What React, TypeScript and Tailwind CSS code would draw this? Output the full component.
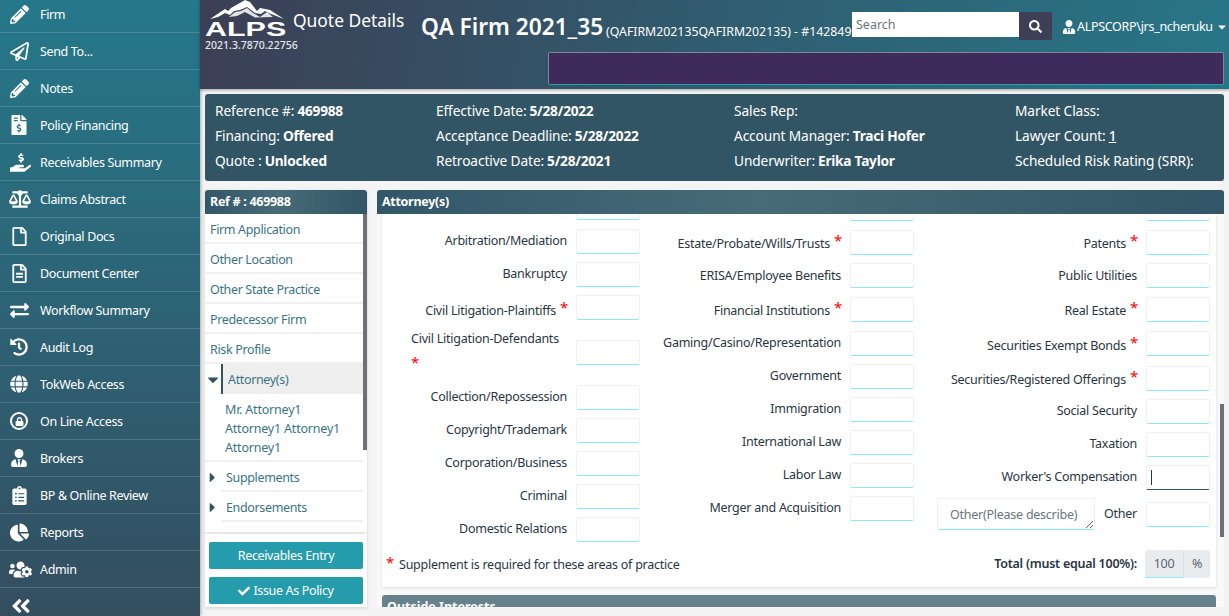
import { FaPencilAlt, FaRegPaperPlane, FaFileInvoiceDollar, FaHandHoldingUsd, FaBalanceScale, FaRegFile, FaRegFileAlt, FaExchangeAlt, FaHistory, FaGlobe, FaLock, FaUserTie, FaClipboardList, FaChartPie, FaUsersCog, FaAngleDoubleLeft, FaSearch, FaCheck, FaCaretDown, FaCaretRight } from 'react-icons/fa';
import type { ReactNode } from 'react';

const font = '[font-family:"Noto_Sans",sans-serif]';

function OnlineIcon() {
  return (
    <span className="relative flex h-[18px] w-[18px] items-center justify-center rounded-full border-2 border-white">
      <FaLock className="text-[9px]" />
    </span>
  );
}

const navItems: { label: string; icon: ReactNode; cls: string }[] = [
  { label: 'Firm', icon: <FaPencilAlt className="text-[19px]" />, cls: 'h-[33px]' },
  { label: 'Send To...', icon: <FaRegPaperPlane className="text-[19px]" />, cls: 'h-[37px]' },
  { label: 'Notes', icon: <FaPencilAlt className="text-[19px]" />, cls: 'h-[37px]' },
  { label: 'Policy Financing', icon: <FaFileInvoiceDollar className="text-[20px] -ml-[1px]" />, cls: 'h-[37px]' },
  { label: 'Receivables Summary', icon: <FaHandHoldingUsd className="text-[21px]" />, cls: 'h-[37px]' },
  { label: 'Claims Abstract', icon: <FaBalanceScale className="text-[22px] -ml-[1px]" />, cls: 'h-[37px]' },
  { label: 'Original Docs', icon: <FaRegFile className="text-[19px]" />, cls: 'h-[37px]' },
  { label: 'Document Center', icon: <FaRegFileAlt className="text-[19px]" />, cls: 'h-[37px]' },
  { label: 'Workflow Summary', icon: <FaExchangeAlt className="text-[19px]" />, cls: 'h-[37px]' },
  { label: 'Audit Log', icon: <FaHistory className="text-[18px]" />, cls: 'h-[37px]' },
  { label: 'TokWeb Access', icon: <FaGlobe className="text-[18px]" />, cls: 'h-[37px]' },
  { label: 'On Line Access', icon: <OnlineIcon />, cls: 'h-[37px]' },
  { label: 'Brokers', icon: <FaUserTie className="text-[18px]" />, cls: 'h-[37px]' },
  { label: 'BP & Online Review', icon: <FaClipboardList className="text-[19px]" />, cls: 'h-[37px]' },
  { label: 'Reports', icon: <FaChartPie className="text-[19px]" />, cls: 'h-[37px]' },
  { label: 'Admin', icon: <FaUsersCog className="text-[23px] -ml-[1px]" />, cls: 'h-[37px]' },
];

function Sidebar() {
  return (
    <aside className="flex w-[200px] shrink-0 flex-col bg-[linear-gradient(180deg,#25788a,#344e60)] text-white shadow-[1px_0_3px_rgba(0,0,0,0.3)]">
      {navItems.map((item) => (
        <div key={item.label} className={`flex items-end border-b border-white/15 pl-[10px] ${item.cls}`}>
          <div className="flex h-[36px] items-center">
            <span className="flex w-[30px] items-center">{item.icon}</span>
            <span className="pt-[2px] text-[12.5px] tracking-[-0.35px]">{item.label}</span>
          </div>
        </div>
      ))}
      <div className="flex flex-1 items-center pt-[7px] pl-[10px]">
        <FaAngleDoubleLeft className="text-[22px]" />
      </div>
    </aside>
  );
}

function Logo() {
  return (
    <div className="w-[93px] shrink-0 pl-[5px] text-white">
      <svg viewBox="0 0 80 20" className="block h-[20px] w-[80px]" fill="currentColor">
        <polygon points="5,19 20,9 23,11 26,8 40,0 45,2 52,11 55,8 65,10 79,19 66,14 60,11 56,14 50,13 42,7 35,10 29,11 25,15 20,13 13,17" />
        <polygon points="24,17 30,12 36,11 42,8 48,13 55,17 62,12 68,17 50,17.5 40,12 32,16" opacity="0.85" />
      </svg>
      <div className="h-[17px] w-fit origin-left [transform:scaleX(1.45)] text-[21px] leading-[17px] font-bold [font-family:'Liberation_Sans',sans-serif]">ALPS</div>
      <div className="mt-[1px] text-[10.5px] leading-[14px] font-medium text-[#e4e8ea]">2021.3.7870.22756</div>
    </div>
  );
}

function Header() {
  return (
    <header className="flex h-[89px] shrink-0 bg-[linear-gradient(100deg,#3c3f55,#2f5f72_55%,#277687)] text-white shadow-[0_1px_3px_rgba(0,0,0,0.35)]">
      <Logo />
      <div className="flex min-w-0 flex-1 flex-col">
        <div className="flex h-[52px] items-start">
          <div className="w-[128px] shrink-0 pt-[6px] text-[17.4px] leading-[28px]">Quote Details</div>
          <div className="w-[185px] shrink-0 pt-[11px] text-[22.7px] leading-[32px] font-semibold whitespace-nowrap">QA Firm 2021_35</div>
          <div className="w-[246px] shrink-0 pt-[23px] text-[12.3px] leading-[18px] whitespace-nowrap">(QAFIRM202135QAFIRM202135) - #142849</div>
          <div className="mt-[12px] flex items-start">
            <div className="h-[25px] w-[167px] bg-white pl-[4px] text-[12.5px] leading-[25px] text-[#6c757d]">Search</div>
            <div className="flex h-[28px] w-[33px] items-center justify-center rounded-r-[2px] bg-[#3c3f55]">
              <FaSearch className="text-[13px]" />
            </div>
          </div>
          <div className="mt-[17px] ml-[10px] flex items-center text-[12.5px] leading-[20px] tracking-[-0.3px] whitespace-nowrap">
            <FaUserTie className="mr-[1px] text-[14px]" />
            <span>ALPSCORP\jrs_ncheruku</span>
            <FaCaretDown className="ml-[3px] text-[12px]" />
          </div>
        </div>
        <div className="mr-[5px] ml-auto h-[33px] w-[676px] rounded-[2px] border border-[#7d8a93] border-b-[#25a0b0] bg-[#3f2a5c]" />
      </div>
    </header>
  );
}

const infoCols: { w: string; rows: [string, string][] }[] = [
  { w: 'w-[221px]', rows: [['Reference #:', '469988'], ['Financing:', 'Offered'], ['Quote :', 'Unlocked']] },
  { w: 'w-[298px]', rows: [['Effective Date:', '5/28/2022'], ['Acceptance Deadline:', '5/28/2022'], ['Retroactive Date:', '5/28/2021']] },
  { w: 'w-[281px]', rows: [['Sales Rep:', ''], ['Account Manager:', 'Traci Hofer'], ['Underwriter:', 'Erika Taylor']] },
  { w: 'w-[209px]', rows: [['Market Class:', ''], ['Lawyer Count:', '1'], ['Scheduled Risk Rating (SRR):', '']] },
];

function InfoPanel() {
  return (
    <section className="mx-[5px] mt-[5px] flex h-[87px] shrink-0 rounded-[3px] bg-[#325566] pt-[4px] pl-[10px] text-[13.7px] leading-[25px] tracking-[-0.1px] text-white">
      {infoCols.map((col) => (
        <div key={col.w} className={col.w}>
          {col.rows.map(([k, v]) => (
            <div key={k} className="whitespace-nowrap">
              {k}
              {v && <b className={`ml-[3px] font-bold tracking-[-0.25px] ${v === '1' ? 'font-medium underline' : ''}`}>{v}</b>}
            </div>
          ))}
        </div>
      ))}
    </section>
  );
}

const panelHead = 'flex h-[24px] shrink-0 items-center rounded-t-[3px] bg-[linear-gradient(90deg,#325769,#486b78_45%,#325567)] text-[12.5px] font-bold tracking-[-0.3px] text-white';

function LeftCard() {
  const item = 'flex h-[30px] items-center border-b-2 border-[#f0f0f0] pt-[4px] pl-[5px]';
  return (
    <div className="flex h-[417px] w-[162px] shrink-0 flex-col bg-white text-[12.5px] tracking-[-0.35px] text-[#3a7486] shadow-[0_1px_3px_rgba(0,0,0,0.15)]">
      <div className={`${panelHead} pl-[5px]`}>Ref # : 469988</div>
      <div className="relative h-[318px] shrink-0 overflow-hidden pr-[4px]">
        {['Firm Application', 'Other Location', 'Other State Practice', 'Predecessor Firm', 'Risk Profile'].map((t) => (
          <div key={t} className={item}>{t}</div>
        ))}
        <div className="flex h-[30px] items-stretch">
          <span className="flex w-[16px] items-center justify-center text-[#2f5567]"><FaCaretDown className="text-[17px]" /></span>
          <span className="flex flex-1 items-center border-l-2 border-[#2f5567] bg-[#eeeeee] pt-[3px] pl-[5px]">Attorney(s)</span>
        </div>
        <div className="h-[68px] border-b-2 border-[#f0f0f0] pt-[6px] pl-[20px] leading-[19px] tracking-[-0.2px]">
          Mr. Attorney1<br />Attorney1 Attorney1<br />Attorney1
        </div>
        {['Supplements', 'Endorsements'].map((t) => (
          <div key={t} className="flex h-[30px] items-stretch">
            <span className="flex w-[16px] items-center justify-center text-[#2f5567]"><FaCaretRight className="-ml-[1px] text-[15px]" /></span>
            <span className="flex flex-1 items-center border-b-2 border-[#f0f0f0] pt-[4px] pl-[5px]">{t}</span>
          </div>
        ))}
        <div className="absolute top-0 right-0 h-[236px] w-[4px] bg-[#6f6f75]" />
      </div>
      <div className="flex flex-1 flex-col gap-[8px] border-t-2 border-[#e6e8ea] px-[4px] pt-[8px] text-white">
        <div className="flex h-[27px] items-center justify-center rounded-[2px] bg-[#259cab] pt-[1px]">Receivables Entry</div>
        <div className="flex h-[27px] items-center justify-center gap-[3px] rounded-[2px] bg-[#259cab] pt-[1px]">
          <FaCheck className="text-[12px]" />
          Issue As Policy
        </div>
      </div>
    </div>
  );
}

type Field = { label: string; star?: boolean; h: string; pad?: string };

const col1: Field[] = [
  { label: 'Banking/Finance', h: 'h-[29px] -mt-[19px]' },
  { label: 'Arbitration/Mediation', h: 'h-[33px] mt-[5px]' },
  { label: 'Bankruptcy', h: 'h-[33px]' },
  { label: 'Civil Litigation-Plaintiffs', star: true, h: 'h-[45px]', pad: 'pt-[4px]' },
  { label: 'Collection/Repossession', h: 'h-[33px]' },
  { label: 'Copyright/Trademark', h: 'h-[33px]' },
  { label: 'Corporation/Business', h: 'h-[33px]' },
  { label: 'Criminal', h: 'h-[33px]' },
  { label: 'Domestic Relations', h: 'h-[33px]' },
];

const col2: Field[] = [
  { label: '', h: 'h-[34px] -mt-[18px]' },
  { label: 'Estate/Probate/Wills/Trusts', star: true, h: 'h-[33px]', pad: 'pt-[2px]' },
  { label: 'ERISA/Employee Benefits', h: 'h-[34px]', pad: 'pt-[1px]' },
  { label: 'Financial Institutions', star: true, h: 'h-[34px]', pad: 'pt-[2px]' },
  { label: 'Gaming/Casino/Representation', h: 'h-[33px]' },
  { label: 'Government', h: 'h-[33px]' },
  { label: 'Immigration', h: 'h-[33px]' },
  { label: 'International Law', h: 'h-[33px]' },
  { label: 'Labor Law', h: 'h-[33px]' },
  { label: 'Merger and Acquisition', h: 'h-[33px]' },
];

const col3: Field[] = [
  { label: '', h: 'h-[34px] -mt-[18px]' },
  { label: 'Patents', star: true, h: 'h-[33px]', pad: 'pt-[2px]' },
  { label: 'Public Utilities', h: 'h-[34px]', pad: 'pt-[1px]' },
  { label: 'Real Estate', star: true, h: 'h-[34px]', pad: 'pt-[2px]' },
  { label: 'Securities Exempt Bonds', star: true, h: 'h-[35px]', pad: 'pt-[3px]' },
  { label: 'Securities/Registered Offerings', star: true, h: 'h-[33px]', pad: 'pt-[2px]' },
  { label: 'Social Security', h: 'h-[33px]' },
  { label: 'Taxation', h: 'h-[33px]' },
  { label: "Worker's Compensation", h: 'h-[33px]' },
];

function Input({ focused }: { focused?: boolean }) {
  return (
    <div className={`ml-[9px] flex h-[24.5px] w-[64px] shrink-0 items-center rounded-[2px] border border-[#f0f1f2] bg-white pl-[4px] ${focused ? 'border-b-[#2f5567]' : 'border-b-[#8ceaf5]'}`}>
      {focused && <span className="h-[15px] w-[1px] bg-[#1f3c4a]" />}
    </div>
  );
}

function Row({ f, focused }: { f: Field; focused?: boolean }) {
  return (
    <div className={`flex items-start justify-end ${f.h}`}>
      <div className={`flex text-right leading-[24px] whitespace-nowrap ${f.pad ?? ''}`}>
        {f.label}
        {f.star && <span className="ml-[4px] w-[7px] text-[15px] leading-[16px] text-[#ff0000]">*</span>}
      </div>
      <Input focused={focused} />
    </div>
  );
}

function FormCard() {
  return (
    <div className="relative h-[373px] w-[834px] shrink-0 overflow-hidden bg-white text-[12.5px] tracking-[-0.25px] text-[#2a3644] shadow-[0_1px_3px_rgba(0,0,0,0.12)]">
      <div className="flex">
        <div className="w-[272px] shrink-0 pr-[14px]">
          {col1.slice(0, 4).map((f) => <Row key={f.label} f={f} />)}
          <div className="flex h-[45px] items-start">
            <div className="-mt-[13px] w-[185px] shrink-0 pl-[29px] leading-[24px] whitespace-nowrap">
              Civil Litigation-Defendants
              <div className="text-[15px] leading-[22px] text-[#ff0000]">*</div>
            </div>
            <Input />
          </div>
          {col1.slice(4).map((f) => <Row key={f.label} f={f} />)}
        </div>
        <div className="w-[274px] shrink-0 pr-[14px]">
          {col2.map((f) => <Row key={f.label || 'c2'} f={f} />)}
        </div>
        <div className="w-[288px] shrink-0 pr-[6px]">
          {col3.map((f) => <Row key={f.label || 'c3'} f={f} focused={f.label === "Worker's Compensation"} />)}
          <div className="flex items-start justify-end">
            <div className="relative flex h-[32px] w-[158px] items-center rounded-[2px] border border-[#f0f1f2] border-b-[#8ceaf5] bg-white pt-[2px] pl-[12px] text-[#6c757d]">
              Other(Please describe)
              <span className="absolute right-[1px] bottom-[1px] h-[7px] w-[7px] bg-[linear-gradient(135deg,transparent_45%,#666_45%,#666_55%,transparent_55%,transparent_75%,#666_75%,#666_85%,transparent_85%)]" />
            </div>
            <div className="ml-[9px] pt-[4px] leading-[24px]">Other</div>
            <div className="mt-[4px]"><Input /></div>
          </div>
        </div>
      </div>
      <div className="absolute right-0 bottom-[9px] left-0 flex items-center justify-between pr-[6px] pl-[4px]">
        <div className="flex items-center pt-[2px]">
          <span className="mr-[5px] -mt-[5px] text-[15px] text-[#ff0000]">*</span>
          Supplement is required for these areas of practice
        </div>
        <div className="flex items-center font-semibold">
          Total (must equal 100%):
          <div className="ml-[8px] flex h-[28px] w-[65px] items-center rounded-[3px] bg-[#e9ecef] font-normal text-[#5d6670]">
            <span className="w-[39px] border-r border-b border-r-[#dde0e3] border-b-[#8ceaf5] text-center leading-[27px]">100</span>
            <span className="flex-1 text-center">%</span>
          </div>
        </div>
      </div>
    </div>
  );
}

function RightPanel() {
  return (
    <div className="relative ml-[10px] flex h-[417px] w-[847px] shrink-0 flex-col">
      <div className={`${panelHead} pl-[5px]`}>Attorney(s)</div>
      <div className="flex-1 overflow-hidden bg-[#f9f9f9] pl-[5px]">
        <FormCard />
        <div className="mt-[8px] h-[24px] w-[834px] rounded-t-[3px] bg-[#67828d] pl-[5px] text-[12.5px] leading-[24px] font-bold text-white">Outside Interests</div>
      </div>
      <div className="absolute top-[214px] right-0 h-[133px] w-[4px] bg-[#6f6f75]" />
    </div>
  );
}

export default function App() {
  return (
    <div className={`flex h-[616px] w-[1229px] overflow-hidden bg-[#f4f4f4] ${font}`}>
      <Sidebar />
      <main className="flex min-w-0 flex-1 flex-col">
        <Header />
        <InfoPanel />
        <div className="mt-[9px] ml-[5px] flex">
          <LeftCard />
          <RightPanel />
        </div>
      </main>
    </div>
  );
}
